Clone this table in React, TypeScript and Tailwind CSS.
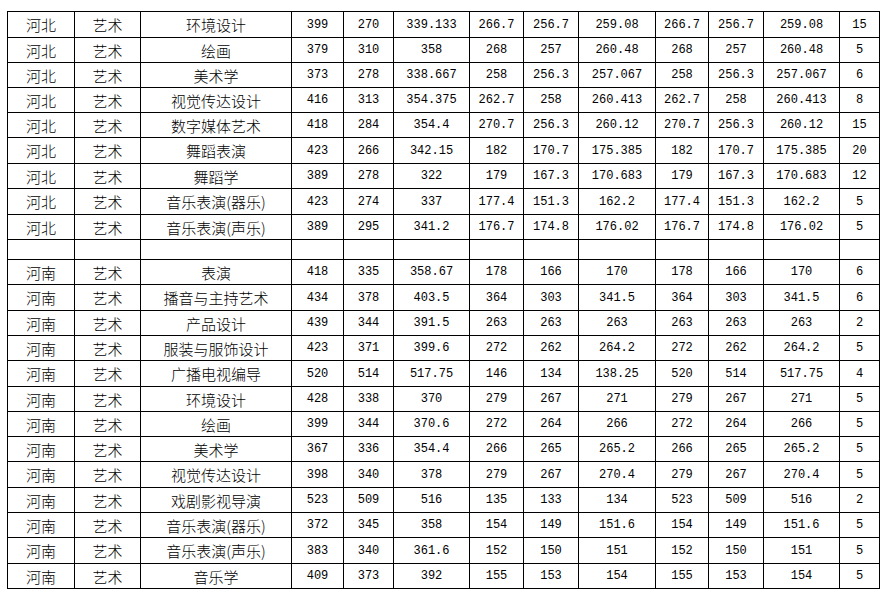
import React from "react";

const rows: (string[] | null)[] = [
  ["河北", "艺术", "环境设计", "399", "270", "339.133", "266.7", "256.7", "259.08", "266.7", "256.7", "259.08", "15"],
  ["河北", "艺术", "绘画", "379", "310", "358", "268", "257", "260.48", "268", "257", "260.48", "5"],
  ["河北", "艺术", "美术学", "373", "278", "338.667", "258", "256.3", "257.067", "258", "256.3", "257.067", "6"],
  ["河北", "艺术", "视觉传达设计", "416", "313", "354.375", "262.7", "258", "260.413", "262.7", "258", "260.413", "8"],
  ["河北", "艺术", "数字媒体艺术", "418", "284", "354.4", "270.7", "256.3", "260.12", "270.7", "256.3", "260.12", "15"],
  ["河北", "艺术", "舞蹈表演", "423", "266", "342.15", "182", "170.7", "175.385", "182", "170.7", "175.385", "20"],
  ["河北", "艺术", "舞蹈学", "389", "278", "322", "179", "167.3", "170.683", "179", "167.3", "170.683", "12"],
  ["河北", "艺术", "音乐表演(器乐)", "423", "274", "337", "177.4", "151.3", "162.2", "177.4", "151.3", "162.2", "5"],
  ["河北", "艺术", "音乐表演(声乐)", "389", "295", "341.2", "176.7", "174.8", "176.02", "176.7", "174.8", "176.02", "5"],
  null,
  ["河南", "艺术", "表演", "418", "335", "358.67", "178", "166", "170", "178", "166", "170", "6"],
  ["河南", "艺术", "播音与主持艺术", "434", "378", "403.5", "364", "303", "341.5", "364", "303", "341.5", "6"],
  ["河南", "艺术", "产品设计", "439", "344", "391.5", "263", "263", "263", "263", "263", "263", "2"],
  ["河南", "艺术", "服装与服饰设计", "423", "371", "399.6", "272", "262", "264.2", "272", "262", "264.2", "5"],
  ["河南", "艺术", "广播电视编导", "520", "514", "517.75", "146", "134", "138.25", "520", "514", "517.75", "4"],
  ["河南", "艺术", "环境设计", "428", "338", "370", "279", "267", "271", "279", "267", "271", "5"],
  ["河南", "艺术", "绘画", "399", "344", "370.6", "272", "264", "266", "272", "264", "266", "5"],
  ["河南", "艺术", "美术学", "367", "336", "354.4", "266", "265", "265.2", "266", "265", "265.2", "5"],
  ["河南", "艺术", "视觉传达设计", "398", "340", "378", "279", "267", "270.4", "279", "267", "270.4", "5"],
  ["河南", "艺术", "戏剧影视导演", "523", "509", "516", "135", "133", "134", "523", "509", "516", "2"],
  ["河南", "艺术", "音乐表演(器乐)", "372", "345", "358", "154", "149", "151.6", "154", "149", "151.6", "5"],
  ["河南", "艺术", "音乐表演(声乐)", "383", "340", "361.6", "152", "150", "151", "152", "150", "151", "5"],
  ["河南", "艺术", "音乐学", "409", "373", "392", "155", "153", "154", "155", "153", "154", "5"],
];

// rows that are 26px instead of 25px, to follow the sheet's grid lines
const tall = [0, 5, 7, 11, 14, 18, 21];

const widths = [
  "w-[67px]", "w-[66px]", "w-[151px]", "w-[52px]", "w-[50px]", "w-[76px]", "w-[54px]",
  "w-[55px]", "w-[77px]", "w-[53px]", "w-[55px]", "w-[76px]", "w-[40px]",
];

const cjk = "font-['Noto_Sans_CJK_SC',sans-serif] font-light text-[15px]";
const num = "font-['Liberation_Mono',monospace] text-[12px]";

export default function App() {
  return (
    <div className="h-[600px] w-[890px] bg-white pl-[7px] pt-[11px] text-black">
      <table className="table-fixed border-collapse">
        <colgroup>
          {widths.map((w, i) => (
            <col key={i} className={w} />
          ))}
        </colgroup>
        <tbody>
          {rows.map((r, i) =>
            r === null ? (
              <tr key={i} className="h-[20px]">
                {widths.map((_, j) => (
                  <td key={j} className="border border-black p-0" />
                ))}
              </tr>
            ) : (
              <tr key={i} className={tall.includes(i) ? "h-[26px]" : "h-[25px]"}>
                {r.map((c, j) => (
                  <td
                    key={j}
                    className={`border border-black p-0 text-center leading-none whitespace-nowrap ${j < 3 ? cjk : num}`}
                  >
                    {c}
                  </td>
                ))}
              </tr>
            )
          )}
        </tbody>
      </table>
    </div>
  );
}
